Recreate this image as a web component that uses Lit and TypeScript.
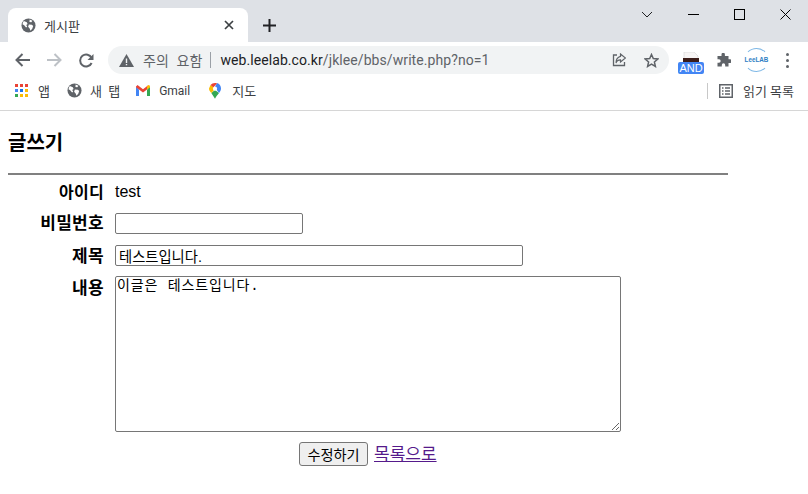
import { LitElement, html, css, svg } from "lit";
import { customElement } from "lit/decorators.js";

const globe = (size: number) => html`<svg width=${size} height=${size} viewBox="0 0 16 16">
  <circle cx="8" cy="8" r="7.500" fill="#5f6368"/>
  <path fill="#fff" d="M3 3.200 6.200 4.600 7 6.400 5.600 7.400 6.600 9.400 5.400 10 3.400 7.600 1.600 6.600C1.800 5.200 2.200 4.200 3 3.200ZM9.200 1.600 12.200 3 11 4.400 9 4.200ZM8.400 6.800 11.600 7.200 13 8.600 12 11.400 10 13.600 9.400 11.400 7.600 9.200Z"/>
</svg>`;

const appsGrid = () => {
  const cols = ["#ea4335", "#ea4335", "#ea4335", "#4285f4", "#1a73e8", "#fbbc04", "#34a853", "#fbbc04", "#fbbc04"];
  return html`<svg width="13" height="13" viewBox="0 0 13 13">
    ${cols.map((c, i) => svg`<rect x=${(i % 3) * 5} y=${Math.floor(i / 3) * 5} width="3" height="3" fill=${c}/>`)}
  </svg>`;
};

@customElement("app-root")
export class AppRoot extends LitElement {
  static styles = css`
    :host { display: block; width: 808px; height: 494px; overflow: hidden; background: #fff; font-family: "Liberation Sans", "Noto Sans CJK KR", sans-serif; color: #000; }
    .ui { font-family: "Roboto", "Noto Sans CJK KR", sans-serif; color: #3c4043; }
    .strip { height: 42px; background: #dee1e6; display: flex; align-items: flex-end; padding-left: 8px; }
    .tab { width: 240px; height: 34px; box-sizing: border-box; background: #fff; border-radius: 8px 8px 0 0; display: flex; align-items: center; padding: 0 14px 0 13px; font-size: 13px; }
    .tab-title { margin-left: 8px; flex: 1; }
    .plus { margin: 0 0 10px 15px; align-self: flex-end; display: flex; }
    .winctl { margin-left: auto; display: flex; align-self: flex-start; }
    .winbtn { width: 46px; height: 28px; display: flex; align-items: center; justify-content: center; }
    .toolbar { height: 36px; display: flex; align-items: center; padding-left: 15px; background: #fff; }
    .nav { display: flex; width: 93px; gap: 17px; align-items: center; }
    .omni { width: 561px; height: 28px; border-radius: 14px; background: #f1f3f4; display: flex; align-items: center; padding: 0 10px 0 11px; box-sizing: border-box; font-size: 14px; letter-spacing: .08px; }
    .warn-t { margin-left: 9px; color: #5f6368; font-size: 14px; word-spacing: 4px; }
    .sep { width: 1px; height: 16px; background: #9aa0a6; margin: 0 9px 0 8px; }
    .host { color: #202124; }
    .path { color: #5f6368; }
    .omni-end { margin-left: auto; display: flex; gap: 18px; align-items: center; }
    .exts { display: flex; align-items: center; margin-left: 9px; }
    .and { display: flex; flex-direction: column; width: 26px; margin-top: 6px; }
    .and svg { display: block; }
    .and-badge { height: 12px; border-radius: 2px; background: #4285f4; color: #fff; font: 400 11px/12px "Liberation Sans", sans-serif; text-align: center; }
    .puzzle { margin-left: 12px; display: flex; }
    .lee { width: 23px; height: 22px; margin-left: 13px; border-radius: 50%; border: 1px solid #7fb8e6; border-left-color: #fff; border-right-color: #fff; color: #2f7fc4; font: 700 6.300px/22px "Liberation Sans", sans-serif; display: flex; justify-content: center; white-space: nowrap; box-sizing: content-box; }
    .dots { margin-left: 17px; display: flex; flex-direction: column; gap: 3px; }
    .dots i { width: 3px; height: 3px; border-radius: 50%; background: #5f6368; display: block; }
    .bookmarks { height: 33px; border-bottom: 1px solid #d6d6d6; box-sizing: border-box; display: flex; align-items: center; padding: 0 0 7px 15px; font-size: 13px; background: #fff; }
    .bm { display: flex; align-items: center; }
    .apps { gap: 10px; margin-right: 17px; }
    .news { gap: 8px; margin-right: 16px; word-spacing: 3px; }
    .gmail { gap: 9px; margin-right: 19px; font-size: 12px; }
    .maps { gap: 11px; }
    .reading { margin-left: auto; display: flex; align-items: center; padding-right: 14px; }
    .reading-sep { width: 1px; height: 16px; background: #c8c8c8; margin-right: 11px; }
    .reading-t { margin-left: 10px; }
    main { padding: 0 8px; width: 720px; }
    h3 { font-size: 20px; font-weight: 700; margin: 0; padding-top: 17px; line-height: 28px; font-family: "Noto Sans CJK KR", sans-serif; }
    .rule { height: 2px; background: #808080; margin-top: 17px; }
    .form { display: grid; grid-template-columns: 96px 1fr; column-gap: 11px; padding-top: 4px; }
    .lbl { font-weight: 700; font-size: 17px; letter-spacing: .3px; text-align: right; font-family: "Noto Sans CJK KR", sans-serif; line-height: 24px; }
    .id { line-height: 24px; font-size: 16px; height: 32px; }
    .val { line-height: 26px; }
    .r2 { height: 32px; padding-top: 2px; box-sizing: border-box; }
    .lbl.r2 { padding-top: 0; line-height: 22px; }
    .r3 { height: 33px; padding-top: 2px; box-sizing: border-box; }
    .lbl.r3 { padding-top: 0; }
    .lbl.r4 { line-height: 22px; }
    input, textarea { box-sizing: border-box; border: 1px solid #767676; border-radius: 2px; margin: 0; display: block; padding: 1px 3px; background: #fff; color: #000; outline: none; }
    input { height: 21px; font: 14.300px "Liberation Sans", "Noto Sans CJK KR", sans-serif; }
    .pw { width: 188px; }
    .title { width: 408px; }
    textarea { width: 506px; height: 156px; padding: 1px; font: 14px/16px "Liberation Mono", "Noto Sans CJK KR", monospace; letter-spacing: .9px; }
    .actions { padding: 8px 0 0 291px; display: flex; align-items: center; gap: 6px; }
    button { width: 69px; height: 24px; box-sizing: border-box; padding: 0; border: 1px solid #767676; border-radius: 3px; background: #efefef; font: 14.200px "Noto Sans CJK KR", sans-serif; color: #000; }
    a { color: #551a8b; text-decoration: underline; font: 17px "Noto Sans CJK KR", sans-serif; margin-bottom: 3px; }
  `;

  render() {
    return html`
      <div class="ui">
        <div class="strip">
          <div class="tab">
            ${globe(15)}
            <span class="tab-title">게시판</span>
            <svg width="10" height="10" viewBox="0 0 10 10"><path d="M1 1 9 9M9 1 1 9" stroke="#3c4043" stroke-width="1.700" fill="none"/></svg>
          </div>
          <div class="plus"><svg width="13" height="13" viewBox="0 0 13 13"><path d="M6.500 0V13M0 6.500H13" stroke="#202124" stroke-width="2" fill="none"/></svg></div>
          <div class="winctl">
            <div class="winbtn"><svg width="12" height="7" viewBox="0 0 12 7"><path d="M1 1 6 6 11 1" stroke="#202124" fill="none"/></svg></div>
            <div class="winbtn"><svg width="11" height="1" viewBox="0 0 11 1"><rect width="11" height="1" fill="#000"/></svg></div>
            <div class="winbtn"><svg width="11" height="11" viewBox="0 0 11 11"><rect x=".5" y=".5" width="10" height="10" fill="none" stroke="#000"/></svg></div>
            <div class="winbtn"><svg width="11" height="11" viewBox="0 0 11 11"><path d="M.5.5 10.500 10.500M10.500.5.5 10.500" stroke="#000" fill="none"/></svg></div>
          </div>
        </div>
        <div class="toolbar">
          <div class="nav">
            <svg width="15" height="14" viewBox="0 0 15 14"><path d="M15 7H2M7.500 1 1.500 7 7.500 13" stroke="#5f6368" stroke-width="2" fill="none"/></svg>
            <svg width="15" height="14" viewBox="0 0 15 14"><path d="M0 7H13M7.500 1 13.500 7 7.500 13" stroke="#bdc1c6" stroke-width="2" fill="none"/></svg>
            <svg width="15" height="15" viewBox="0 0 15 15"><path d="M12.600 10A6 6 0 1 1 12.600 5" stroke="#5f6368" stroke-width="2" fill="none"/><path d="M14.500 1V7H8.500Z" fill="#5f6368"/></svg>
          </div>
          <div class="omni">
            <svg width="15" height="13" viewBox="0 0 15 13"><path fill="#5f6368" d="M7.500 0 15 13H0Z"/><path fill="#f1f3f4" d="M6.800 4.500h1.400v4.500H6.800ZM6.800 10h1.400v1.300H6.800Z"/></svg>
            <span class="warn-t">주의 요함</span><span class="sep"></span>
            <span><span class="host">web.leelab.co.kr</span><span class="path">/jklee/bbs/write.php?no=1</span></span>
            <div class="omni-end">
              <svg width="14" height="14" viewBox="0 0 14 14"><path d="M5 2H1.500V12.500H12.500V9" stroke="#5f6368" stroke-width="1.300" fill="none"/><path d="M8.500 1 13.500 5 8.500 9V6.800C6 6.800 4.500 8 4 10 4 6.500 6 4 8.500 3.400Z" stroke="#5f6368" stroke-width="1.200" fill="none"/></svg>
              <svg width="15" height="15" viewBox="0 0 15 15"><path d="M7.500 1.500 9.300 5.600 13.800 6 10.400 9 11.400 13.400 7.500 11.100 3.600 13.400 4.600 9 1.200 6 5.700 5.600Z" stroke="#5f6368" stroke-width="1.500" fill="none"/></svg>
            </div>
          </div>
          <div class="exts">
            <div class="and">
              <svg width="26" height="10" viewBox="0 0 26 10"><path d="M6 0H16L20 4V10H6Z" fill="#f7f5f5" stroke="#d4d4d4" stroke-width=".6"/><rect x="5" y="6" width="16" height="4" fill="#3b1d1a"/></svg>
              <div class="and-badge">AND</div>
            </div>
            <div class="puzzle"><svg width="15" height="15" viewBox="0 0 15 15"><path fill="#5f6368" d="M5.500 1.500a1.700 1.700 0 0 1 3.400 0V3H12.500V6.300H14a1.800 1.800 0 0 1 0 3.600H12.500V13.500H9.200V12a1.700 1.700 0 0 0-3.400 0V13.500H1.500V9.700H3a1.700 1.700 0 0 0 0-3.400H1.500V3H5.500Z"/></svg></div>
            <div class="lee">LeeLAB</div>
            <div class="dots"><i></i><i></i><i></i></div>
          </div>
        </div>
        <div class="bookmarks">
          <div class="bm apps">${appsGrid()}<span>앱</span></div>
          <div class="bm news">${globe(15)}<span>새 탭</span></div>
          <div class="bm gmail">
            <svg width="14" height="11" viewBox="0 0 14 11"><path fill="#4285f4" d="M0 1.500V11H3V4.500Z"/><path fill="#34a853" d="M14 1.500V11H11V4.500Z"/><path fill="#ea4335" d="M0 1.500 1.500 0 7 4.300 12.500 0 11 4.500 7 7.500 3 4.500 0 2.200Z"/><path fill="#fbbc04" d="M11 1.200 12.500 0C13.500 0 14 .8 14 1.500V2.300L11 4.500Z"/></svg>
            <span>Gmail</span>
          </div>
          <div class="bm maps">
            <svg width="12" height="16" viewBox="0 0 12 16"><path fill="#34a853" d="M2.300 10 6 15.800C7 13.500 8.500 12 10 10L6 7Z"/><path fill="#fbbc04" d="M0 5.500C0 7.500 1.200 8.800 2.300 10L6.500 5.500 1.500 2Z"/><path fill="#4285f4" d="M6 3.500 8 0C10.500.7 12 3 12 5.500 12 7.300 11 8.700 10 10L7.500 6.500Z"/><path fill="#ea4335" d="M1.500 2C2.600.7 4.200 0 6 0 6.700 0 7.400.1 8 .3L4.500 4.500Z"/><circle cx="6" cy="5.700" r="2.100" fill="#fff"/></svg>
            <span>지도</span>
          </div>
          <div class="reading">
            <span class="reading-sep"></span>
            <svg width="14" height="14" viewBox="0 0 14 14"><rect x=".75" y=".75" width="12.500" height="12.500" fill="none" stroke="#5f6368" stroke-width="1.500"/><path d="M3 4H4.500M6 4H11M3 7H4.500M6 7H11M3 10H4.500M6 10H11" stroke="#5f6368" stroke-width="1.300"/></svg>
            <span class="reading-t">읽기 목록</span>
          </div>
        </div>
      </div>
      <main>
        <h3>글쓰기</h3>
        <div class="rule"></div>
        <div class="form">
          <div class="lbl id">아이디</div><div class="id val">test</div>
          <div class="lbl r2">비밀번호</div><div class="r2"><input class="pw" type="text" /></div>
          <div class="lbl r3">제목</div><div class="r3"><input class="title" type="text" value="테스트입니다." /></div>
          <div class="lbl r4">내용</div><div><textarea>이글은 테스트입니다.</textarea></div>
        </div>
        <div class="actions"><button>수정하기</button><a href="#">목록으로</a></div>
      </main>
    `;
  }
}
